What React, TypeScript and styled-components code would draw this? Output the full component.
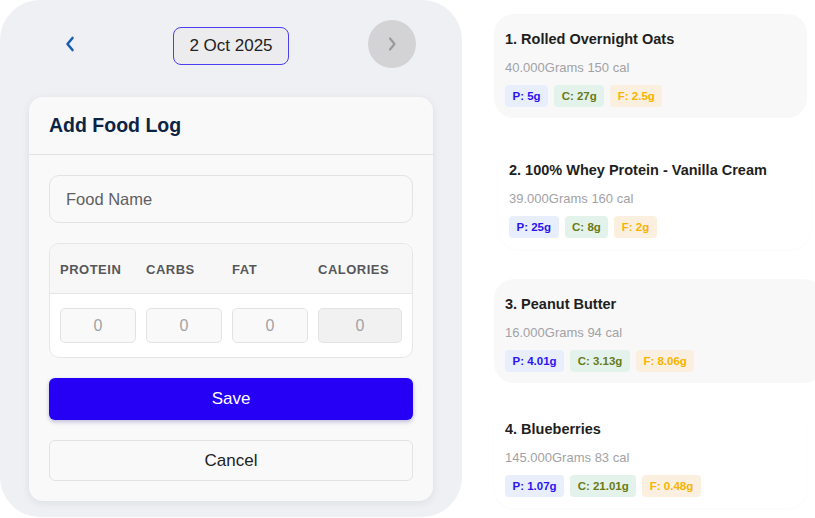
import React from 'react';
import styled, { createGlobalStyle } from 'styled-components';

const GlobalStyle = createGlobalStyle`
  html, body {
    margin: 0;
    padding: 0;
    background: #ffffff;
  }
  body {
    font-family: 'Liberation Sans', Arial, sans-serif;
    -webkit-font-smoothing: antialiased;
  }
`;

type Food = {
  name: string;
  grams: string;
  cal: number;
  p: string;
  c: string;
  f: string;
  tinted: boolean;
  gap: number;
  shift: number;
  wide: boolean;
};

const foods: Food[] = [
  { name: '1. Rolled Overnight Oats', grams: '40.000', cal: 150, p: '5g', c: '27g', f: '2.5g', tinted: true, gap: 14, shift: 0, wide: false },
  { name: '2. 100% Whey Protein - Vanilla Cream', grams: '39.000', cal: 160, p: '25g', c: '8g', f: '2g', tinted: false, gap: 27, shift: 4, wide: false },
  { name: '3. Peanut Butter', grams: '16.000', cal: 94, p: '4.01g', c: '3.13g', f: '8.06g', tinted: true, gap: 30, shift: 0, wide: true },
  { name: '4. Blueberries', grams: '145.000', cal: 83, p: '1.07g', c: '21.01g', f: '0.48g', tinted: false, gap: 21, shift: 0, wide: false },
];

export default function App() {
  return (
    <>
      <GlobalStyle />
      <Page>
        <LeftPanel>
          <Header>
            <BackButton aria-label="Previous day">
              <svg width="10" height="16" viewBox="0 0 10 16">
                <path d="M7.5 2 L2.5 8 L7.5 14" fill="none" stroke="#1b5eae" strokeWidth="2.6" strokeLinecap="round" strokeLinejoin="round" />
              </svg>
            </BackButton>
            <DatePill>2 Oct 2025</DatePill>
            <NextButton aria-label="Next day">
              <svg width="10" height="16" viewBox="0 0 10 16">
                <path d="M3 2.5 L7.5 8 L3 13.5" fill="none" stroke="#9a9a9c" strokeWidth="2.2" strokeLinecap="round" strokeLinejoin="round" />
              </svg>
            </NextButton>
          </Header>

          <Card>
            <CardHeader>
              <CardTitle>Add Food Log</CardTitle>
            </CardHeader>
            <CardBody>
              <NameInput placeholder="Food Name" />
              <MacroTable>
                <MacroHead>
                  <MacroLabel>Protein</MacroLabel>
                  <MacroLabel>Carbs</MacroLabel>
                  <MacroLabel>Fat</MacroLabel>
                  <MacroLabel>Calories</MacroLabel>
                </MacroHead>
                <MacroRow>
                  <MacroInput placeholder="0" />
                  <MacroInput placeholder="0" />
                  <MacroInput placeholder="0" />
                  <MacroInput placeholder="0" $readOnly readOnly />
                </MacroRow>
              </MacroTable>
              <SaveButton>Save</SaveButton>
              <CancelButton>Cancel</CancelButton>
            </CardBody>
          </Card>
        </LeftPanel>

        <FoodList>
          {foods.map((food) => (
            <FoodCard key={food.name} $tinted={food.tinted} $gap={food.gap} $shift={food.shift} $wide={food.wide}>
              <FoodTitle>{food.name}</FoodTitle>
              <FoodMeta>
                {food.grams}Grams {food.cal} cal
              </FoodMeta>
              <Chips>
                <Chip $kind="p">P: {food.p}</Chip>
                <Chip $kind="c">C: {food.c}</Chip>
                <Chip $kind="f">F: {food.f}</Chip>
              </Chips>
            </FoodCard>
          ))}
        </FoodList>
      </Page>
    </>
  );
}

const Page = styled.div`
  display: flex;
  gap: 32px;
  width: 815px;
  height: 518px;
  overflow: hidden;
`;

const LeftPanel = styled.section`
  flex: 0 0 462px;
  height: 517px;
  box-sizing: border-box;
  background: #eff0f4;
  border-radius: 40px;
  padding: 20px 29px 0;
  display: flex;
  flex-direction: column;
`;

const Header = styled.div`
  display: flex;
  align-items: center;
  justify-content: space-between;
  padding: 0 17px;
  height: 48px;
`;

const BackButton = styled.button`
  width: 48px;
  height: 48px;
  border: none;
  background: transparent;
  display: flex;
  align-items: center;
  justify-content: center;
  padding: 0;
`;

const NextButton = styled(BackButton)`
  border-radius: 50%;
  background: #d3d3d6;
`;

const DatePill = styled.div`
  margin-top: 4px;
  height: 38px;
  box-sizing: border-box;
  padding: 0 15px;
  display: flex;
  align-items: center;
  border: 1.5px solid #4a3df2;
  border-radius: 8px;
  background: #ececef;
  font-size: 17px;
  color: #222;
`;

const Card = styled.div`
  margin-top: 29px;
  height: 404px;
  box-sizing: border-box;
  background: #f9f9fa;
  border-radius: 14px;
  box-shadow: 0 2px 8px rgba(20, 20, 40, 0.08);
`;

const CardHeader = styled.div`
  height: 58px;
  box-sizing: border-box;
  padding: 0 20px;
  display: flex;
  align-items: center;
  border-bottom: 1px solid #e1e2e6;
`;

const CardTitle = styled.h2`
  margin: 0;
  font-size: 19.5px;
  font-weight: 700;
  color: #0c2444;
`;

const CardBody = styled.div`
  padding: 20px;
  display: flex;
  flex-direction: column;
  gap: 20px;
`;

const NameInput = styled.input`
  height: 48px;
  box-sizing: border-box;
  border: 1px solid #e2e3e7;
  border-radius: 10px;
  background: #f9f9fa;
  padding: 0 16px;
  font-family: inherit;
  font-size: 16.5px;
  outline: none;
  &::placeholder {
    color: #5f5f62;
  }
`;

const MacroTable = styled.div`
  border: 1px solid #e6e6e9;
  border-radius: 10px;
  overflow: hidden;
  background: #ffffff;
`;

const MacroHead = styled.div`
  display: grid;
  grid-template-columns: 76px 76px 76px 1fr;
  gap: 10px;
  padding: 2px 10px 0;
  height: 50px;
  box-sizing: border-box;
  align-items: center;
  background: #f7f7f8;
  border-bottom: 1px solid #e6e6e9;
`;

const MacroLabel = styled.span`
  font-size: 13px;
  font-weight: 700;
  letter-spacing: 0.5px;
  text-transform: uppercase;
  color: #57575a;
`;

const MacroRow = styled.div`
  display: grid;
  grid-template-columns: 76px 76px 76px 1fr;
  gap: 10px;
  padding: 14px 10px 14px;
`;

const MacroInput = styled.input<{ $readOnly?: boolean }>`
  width: 100%;
  height: 35px;
  box-sizing: border-box;
  border: 1px solid #e3e3e6;
  border-radius: 5px;
  background: ${(p) => (p.$readOnly ? '#f1f1f2' : '#f9f9fa')};
  text-align: center;
  font-family: inherit;
  font-size: 16px;
  outline: none;
  &::placeholder {
    color: #a3a3a6;
  }
`;

const SaveButton = styled.button`
  height: 42px;
  border: none;
  border-radius: 6px;
  background: #2500f5;
  color: #ffffff;
  font-family: inherit;
  font-size: 17px;
  box-shadow: 0 2px 4px rgba(20, 0, 120, 0.25);
`;

const CancelButton = styled.button`
  height: 41px;
  border: 1px solid #e3e3e6;
  border-radius: 6px;
  background: #f9f9fa;
  color: #222;
  font-family: inherit;
  font-size: 17px;
`;

const FoodList = styled.div`
  flex: 1;
  display: flex;
  flex-direction: column;
`;

const FoodCard = styled.div<{ $tinted: boolean; $gap: number; $shift: number; $wide: boolean }>`
  margin-top: ${(p) => p.$gap}px;
  margin-left: ${(p) => p.$shift}px;
  width: ${(p) => (p.$wide ? 330 : 313)}px;
  box-sizing: border-box;
  padding: 16px 11px 11px;
  border-radius: 20px;
  background: ${(p) => (p.$tinted ? '#f8f8f9' : '#ffffff')};
  box-shadow: ${(p) => (p.$tinted ? 'none' : '0 1px 3px rgba(0, 0, 0, 0.025)')};
`;

const FoodTitle = styled.div`
  font-size: 14.5px;
  font-weight: 700;
  line-height: 18px;
  color: #1f1f21;
`;

const FoodMeta = styled.div`
  margin-top: 12px;
  font-size: 13px;
  line-height: 16px;
  color: #a2a2a5;
`;

const Chips = styled.div`
  margin-top: 9px;
  display: flex;
  gap: 6px;
`;

const chipColors = {
  p: { bg: '#e8eefb', fg: '#2a14f0' },
  c: { bg: '#e3f3ec', fg: '#6a7a16' },
  f: { bg: '#fbefdf', fg: '#f7b300' },
};

const Chip = styled.span<{ $kind: 'p' | 'c' | 'f' }>`
  height: 22px;
  padding: 0 7.5px;
  display: flex;
  align-items: center;
  border-radius: 4px;
  font-size: 11.5px;
  font-weight: 700;
  background: ${(p) => chipColors[p.$kind].bg};
  color: ${(p) => chipColors[p.$kind].fg};
`;
